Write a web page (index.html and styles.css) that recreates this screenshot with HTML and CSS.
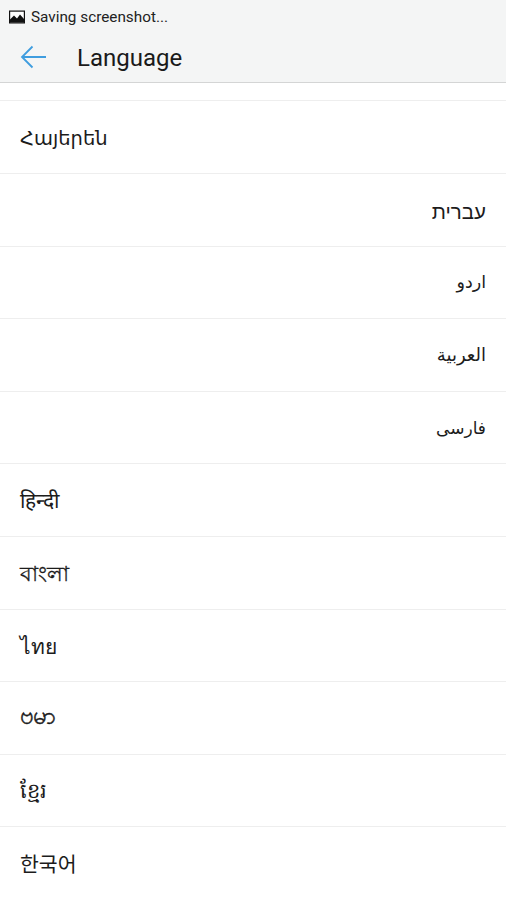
FILE: index.html
```html
<!DOCTYPE html>
<html>
    <head>
        <title>Language</title>
        <link rel="stylesheet" href="styles.css">
    </head>
    <body>
        <div class="top">
            <div class="status">
                <svg class="pic" width="16" height="14" viewBox="0 0 16 14">
                    <rect x="0.6" y="1.1" width="14.8" height="11.8" fill="#fff" stroke="#111" stroke-width="1.2"/>
                    <path d="M1 12.5V9.5L5 5.5L8 8.5L11 4.5L15 9V12.5Z" fill="#111"/>
                </svg>
                <span>Saving screenshot...</span>
            </div>
            <div class="title-bar">
                <svg class="back" width="28" height="24" viewBox="0 0 28 24">
                    <path d="M26 12H2M12.5 1.5L2 12L12.5 22.5" fill="none" stroke="#3f9ddf" stroke-width="1.8"/>
                </svg>
                <h1>Language</h1>
            </div>
        </div>
        <div class="list">
            <div class="stub"></div>
            <div class="row hy">Հայերեն</div>
            <div class="row he" dir="rtl">עברית</div>
            <div class="row ur" dir="rtl">اردو</div>
            <div class="row ar" dir="rtl">العربية</div>
            <div class="row fa" dir="rtl">فارسی</div>
            <div class="row">हिन्दी</div>
            <div class="row bn">বাংলা</div>
            <div class="row th">ไทย</div>
            <div class="row my">ဗမာ</div>
            <div class="row km">ខ្មែរ</div>
            <div class="row ko">한국어</div>
        </div>
    </body>
</html>
```

FILE: styles.css
```css
html, body { margin: 0; padding: 0; }
body { width: 506px; height: 899px; overflow: hidden; background: #fff; font-family: "Roboto", "Liberation Sans", "DejaVu Sans", "Noto Sans CJK KR", sans-serif; color: #1c1c1c; }
.top { height: 82px; background: #f4f5f5; border-bottom: 1px solid #d4d5d5; }
.status { height: 34px; display: flex; align-items: center; padding-left: 9px; font-size: 15.3px; color: #222; }
.pic { margin-right: 6px; }
.title-bar { height: 48px; display: flex; align-items: center; padding-left: 20px; }
.back { margin-top: -2px; }
h1 { margin: 0 0 0 29px; font-size: 24px; font-weight: 400; color: #1a1a1a; }
.stub { height: 17.4px; border-bottom: 1px solid #eeeeee; }
.row { box-sizing: border-box; height: 72.6px; border-bottom: 1px solid #eeeeee; display: flex; align-items: center; padding: 0 20px; font-size: 21px; }
.hy { font-size: 19.5px; padding-top: 3px; }
.he { font-size: 20.5px; padding-top: 5px; }
.ur { font-size: 17.5px; }
.ar { font-size: 18px; }
.fa { font-size: 17px; padding-top: 1px; }
.bn { padding-top: 6px; -webkit-text-stroke: 0.3px #1c1c1c; }
.th { padding-top: 2px; }
.my { font-size: 24px; -webkit-text-stroke: 0.4px #1c1c1c; }
.km { padding-top: 4px; }
.ko { font-size: 20.5px; }
```
